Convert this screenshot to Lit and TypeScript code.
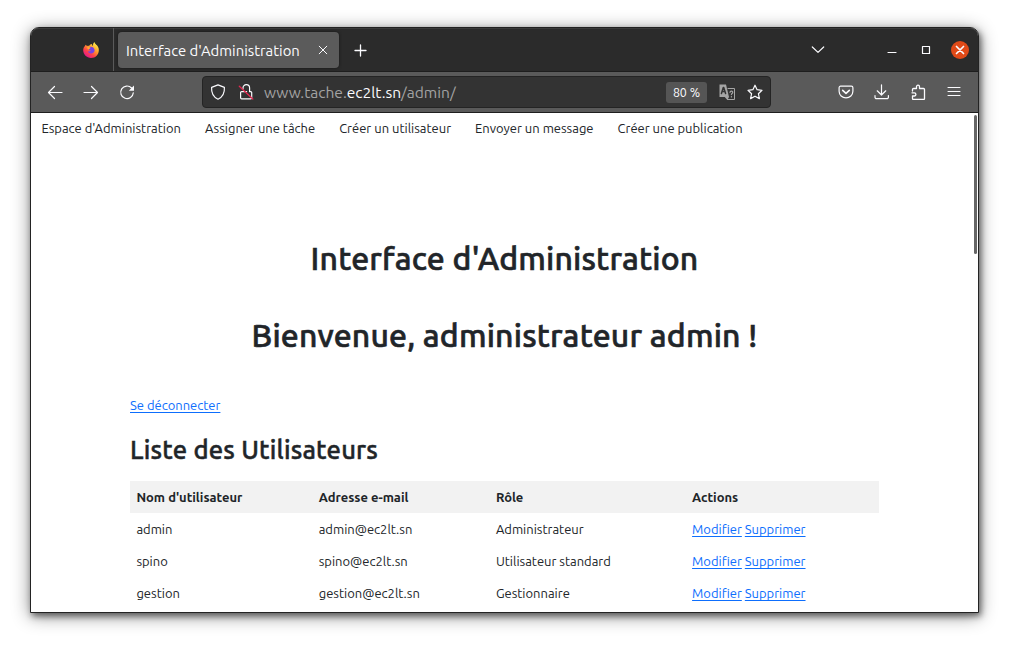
import { LitElement, html, css, svg } from "lit";
import { customElement, property } from "lit/decorators.js";

const ICONS: Record<string, unknown> = {
  back: svg`<path d="M15 8.500H1.500M7.500 2.500l-6 6 6 6"/>`,
  forward: svg`<path d="M1 8.500h13.500M8.500 2.500l6 6-6 6"/>`,
  reload: svg`<path d="M14.300 8.800A6.300 6.300 0 1 1 12.600 4"/><path d="M15 1.600v5.200H9.800z" fill="currentColor" stroke="none"/>`,
  shield: svg`<path d="M8 .9 14.4 3.4c.3 4.8-1 9.4-6.4 11.8C2.6 12.800 1.300 8.200 1.600 3.400z"/>`,
  lock: svg`<path d="M5 5V4a3.300 3.300 0 0 1 6.600 0v3.500M11.500 7.600h1.200a1 1 0 0 1 1 1v5.200a1 1 0 0 1-1 1H3.600a1 1 0 0 1-1-1V8.600a1 1 0 0 1 1-1h5"/><path d="M1.300 2.300 14.800 15" stroke="#e22850" stroke-width="1.300"/>`,
  star: svg`<path d="m8 1.200 2.100 4.500 4.900.6-3.600 3.400 1 4.900L8 12.200l-4.400 2.400 1-4.900L1 6.300l4.900-.6z"/>`,
  pocket: svg`<path d="M2.600 2.200h10.800a1.500 1.500 0 0 1 1.500 1.500v3.600a6.900 6.600 0 0 1-13.800 0V3.700a1.500 1.500 0 0 1 1.500-1.500z"/><path d="M4.700 6.300 8 9.400l3.300-3.100" stroke-width="1.600"/>`,
  download: svg`<path d="M7.500.8v10M3.200 6.800l4.300 4.200 4.300-4.200M1 11.500v1.700a1.500 1.500 0 0 0 1.500 1.500h10.400a1.500 1.500 0 0 0 1.500-1.500v-1.700"/>`,
  puzzle: svg`<path d="M2.500 7V5.500a1 1 0 0 1 1-1h3V2.700a1.500 1.500 0 0 1 3 0v1.800h4a1 1 0 0 1 1 1v9a1 1 0 0 1-1 1h-10a1 1 0 0 1-1-1V12h1.800a1.500 1.500 0 0 0 0-3.200H2" stroke-width="1.300"/>`,
  menu: svg`<path d="M2 3.500h12M2 7.500h12M2 11.500h12" stroke-width="1.100"/>`,
  cross: svg`<path d="m4.500 4.500 7 7M11.500 4.500l-7 7" stroke-width="1.700"/>`,
  tabclose: svg`<path d="m4.200 4.200 7.600 7.600M11.800 4.200l-7.600 7.600" stroke-width="1"/>`,
  plus: svg`<path d="M7.500 3v11M2 8.500h11" stroke-width="1.300"/>`,
  chevron: svg`<path d="m2.300 5 5.700 5.400L13.700 5"/>`,
  minimise: svg`<path d="M4 10.500h8" stroke-width="1.200"/>`,
  maximise: svg`<path d="M4.500 4.500h7v7h-7z" stroke-width="1.200"/>`,
  translate: svg`
    <path d="M.5.500H7L10 13H.5z" fill="#a5a5a5" stroke="none"/>
    <path d="M9 4.500h6.500v11H8.500" stroke="#a5a5a5" stroke-width="1"/>
    <path d="m2.400 9.500 1.900-6h.4l1.900 6M3.200 7.500h2.600" stroke="#333" stroke-width="1.500"/>
    <path d="m5.500 12.800 4.500.2-1.600 3z" fill="#a5a5a5" stroke="none"/>
    <path d="M11 8.300c.2-1.700 2.900-1.500 2.700.2-.1 1-1.300 1-1.300 2.100M12.400 12.500v.5" stroke="#a5a5a5" stroke-width="1.200"/>`,
  firefox: svg`
    <defs>
      <linearGradient id="flame" x1=".85" y1=".1" x2=".25" y2=".95"><stop offset="0" stop-color="#fff04a"/><stop offset=".4" stop-color="#ff9a2e"/><stop offset=".7" stop-color="#ff4348"/><stop offset="1" stop-color="#e3178b"/></linearGradient>
    </defs>
    <g stroke="none">
      <path d="M2.800 2.700c.4.600.8 1 1.300 1.300.6-.2 1.200-.2 1.900-.1C6.700 2.800 7.800 2 9 2c-.1 1 .2 1.700 1 2.100C9.900 2.400 10.300.9 11.500 0c.2 2 3.200 3.200 4 5.900 1.400 4.900-2 10-7.500 10C3.700 15.900.3 12.700.2 8.300.2 6.500.9 4.900 2 4c.1-.5.400-.9.800-1.300z" fill="url(#flame)"/>
      <path d="M5.600 5.400C7.200 3.800 11.400 4.700 11.600 8c.1 2-1.500 3.600-3.500 3.600-1.700 0-3-1.100-3.200-2.500 1.100.7 2.300.3 3.100-.6-1.500.1-2.600-.5-2.400-3.100z" fill="#7542e5"/>
      <path d="M4 5.500c.9-.8 2.600-.8 3.600.2-.3 1-1.500.9-2 1.700C4.900 7 4.300 6.400 4 5.500z" fill="#ffb02e"/>
    </g>`,
};

@customElement("ui-icon")
class UiIcon extends LitElement {
  @property() name = "";
  @property({ type: Number }) size = 16;
  static styles = css`
    :host { display: inline-flex; flex: none; }
    .glyph { display: block; fill: none; stroke: currentColor; stroke-width: 1.2; stroke-linecap: round; stroke-linejoin: round; }
  `;
  render() {
    return html`<svg class="glyph" width=${this.size} height=${this.size} viewBox="0 0 16 16">${ICONS[this.name]}</svg>`;
  }
}

const NAV = ["Espace d'Administration", "Assigner une tâche", "Créer un utilisateur", "Envoyer un message", "Créer une publication"];
const HEAD = ["Nom d'utilisateur", "Adresse e-mail", "Rôle", "Actions"];
const USERS = [
  ["admin", "admin@ec2lt.sn", "Administrateur"],
  ["spino", "spino@ec2lt.sn", "Utilisateur standard"],
  ["gestion", "gestion@ec2lt.sn", "Gestionnaire"],
];

@customElement("app-root")
class AppRoot extends LitElement {
  static styles = css`
    :host { display: block; box-sizing: border-box; width: 1013px; height: 650px; padding: 27px 34px 37px 30px; background: #fff; overflow: hidden; font-family: Ubuntu, "Noto Sans", sans-serif; }
    .window { box-sizing: border-box; height: 586px; display: flex; flex-direction: column; border: 1px solid #232323; border-radius: 9px 9px 0 0; background: #fff; box-shadow: 2px 3px 6px rgba(0,0,0,.5), 0 3px 18px rgba(0,0,0,.45); }
    .strip { box-sizing: border-box; height: 44px; flex: none; display: flex; align-items: center; background: #2b2b2b; color: #fbfbfe; border-bottom: 1px solid #1e1e1e; border-radius: 8px 8px 0 0; box-shadow: inset 0 1px #3b3b3b; }
    .brand { box-sizing: border-box; width: 83px; height: 43px; display: flex; align-items: center; justify-content: flex-end; padding-right: 14px; border-right: 1px solid #5a5a5a; }
    .tab { box-sizing: border-box; width: 221px; height: 36px; margin-left: 4px; padding: 0 8px; display: flex; align-items: center; justify-content: space-between; border-radius: 4px; background: #5b5b5b; font-size: 14.850px; line-height: 18px; box-shadow: 0 0 3px #151515; }
    .caption { padding-top: 2px; }
    .plus { margin-left: 14px; }
    .controls { margin-left: auto; display: flex; align-items: center; padding-right: 9px; }
    .chevron { margin-right: 58px; }
    .min { margin-right: 18px; }
    .max { margin-right: 17px; }
    .close { width: 18px; height: 18px; border-radius: 50%; background: #e04a18; display: flex; align-items: center; justify-content: center; }
    .bar { box-sizing: border-box; height: 41px; flex: none; display: flex; align-items: center; padding-left: 16px; background: #5a5a5a; color: #fbfbfe; border-bottom: 1px solid #1e1e1e; }
    .history { display: flex; gap: 20px; width: 155px; }
    .address { box-sizing: border-box; width: 569px; height: 32px; display: flex; align-items: center; padding: 0 7px; border: 1px solid #242424; border-radius: 4px; background: #333; }
    .lock { margin-left: 12px; }
    .url { margin-left: 10px; font-size: 15.550px; color: #a3a3a3; }
    .domain { color: #fbfbfe; }
    .zoom { width: 41px; height: 21px; margin-left: auto; border-radius: 3px; background: #555; font-size: 12.400px; line-height: 21px; text-align: center; }
    .translate { margin-left: 12px; }
    .star { margin-left: 12px; }
    .tools { margin-left: auto; display: flex; gap: 20px; padding-right: 16px; }
    .page { flex: 1; min-height: 0; display: grid; grid-template-columns: 1fr 4px; overflow: hidden; color: #212529; font-size: 12.970px; line-height: 19.200px; }
    .thumb { width: 3px; height: 139px; margin-top: 2px; border-radius: 2px; background: #666; }
    .nav { display: flex; gap: 24px; padding: 6px 0 0 10.400px; height: 26px; }
    .body { width: 749px; margin-left: 99px; padding-top: 94px; }
    .title { margin: 0; height: 77px; font-size: 32px; font-weight: 500; line-height: 38.400px; letter-spacing: .16px; -webkit-text-stroke: .6px #212529; text-align: center; }
    .logout { height: 19px; margin-top: 3px; }
    .link { color: #0d6efd; text-decoration: underline; text-decoration-thickness: 1px; text-underline-offset: 2px; }
    .subtitle { margin: 18px 0 14px; font-size: 25.600px; font-weight: 500; line-height: 34px; letter-spacing: .19px; -webkit-text-stroke: .45px #212529; }
    .row { display: grid; grid-template-columns: 182.300px 177.200px 196.200px 1fr; height: 32px; line-height: 32px; padding-left: 6.400px; }
    .head { background: #f2f2f2; font-weight: 700; }
  `;

  render() {
    return html`
      <div class="window">
        <div class="strip">
          <div class="brand"><ui-icon name="firefox"></ui-icon></div>
          <div class="tab"><span class="caption">Interface d'Administration</span><ui-icon name="tabclose"></ui-icon></div>
          <ui-icon class="plus" name="plus"></ui-icon>
          <div class="controls">
            <ui-icon class="chevron" name="chevron"></ui-icon>
            <ui-icon class="min" name="minimise"></ui-icon>
            <ui-icon class="max" name="maximise"></ui-icon>
            <div class="close"><ui-icon name="cross"></ui-icon></div>
          </div>
        </div>
        <div class="bar">
          <div class="history"><ui-icon name="back"></ui-icon><ui-icon name="forward"></ui-icon><ui-icon name="reload"></ui-icon></div>
          <div class="address">
            <ui-icon name="shield"></ui-icon>
            <ui-icon class="lock" name="lock"></ui-icon>
            <div class="url">www.tache.<span class="domain">ec2lt.sn</span>/admin/</div>
            <div class="zoom">80 %</div>
            <ui-icon class="translate" name="translate"></ui-icon>
            <ui-icon class="star" name="star"></ui-icon>
          </div>
          <div class="tools"><ui-icon name="pocket"></ui-icon><ui-icon name="download"></ui-icon><ui-icon name="puzzle"></ui-icon><ui-icon name="menu"></ui-icon></div>
        </div>
        <div class="page">
          <div>
            <div class="nav">${NAV.map((t) => html`<span>${t}</span>`)}</div>
            <div class="body">
              <h1 class="title">Interface d'Administration</h1>
              <h1 class="title">Bienvenue, administrateur admin !</h1>
              <div class="logout"><a class="link">Se déconnecter</a></div>
              <h2 class="subtitle">Liste des Utilisateurs</h2>
              <div class="row head">${HEAD.map((t) => html`<div>${t}</div>`)}</div>
              ${USERS.map((u) => html`<div class="row">
                ${u.map((t) => html`<div>${t}</div>`)}
                <div><a class="link">Modifier</a> <a class="link">Supprimer</a></div>
              </div>`)}
            </div>
          </div>
          <div class="thumb"></div>
        </div>
      </div>`;
  }
}
